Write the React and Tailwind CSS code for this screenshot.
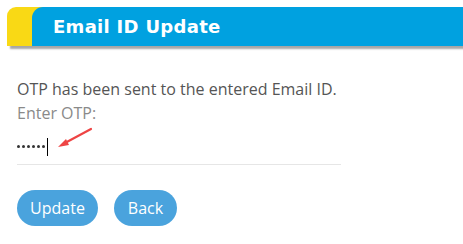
import React from "react";

export default function App() {
  return (
    <div className="relative w-[463px] h-[244px] bg-white overflow-hidden" style={{ fontFamily: '"Open Sans", sans-serif' }}>
      <div className="pt-[7px] pl-[7px]">
        <div className="flex h-[39px] bg-[#f9d915] rounded-tl-[9px] shadow-[3px_3px_2px_rgba(0,0,0,0.35)]">
          <div className="w-[25px]" />
          <div className="flex-1 flex items-center bg-[#00a1e0] rounded-tl-[11px] pl-[21px]">
            <span className="text-white font-bold text-[18px] leading-none mt-[1px] tracking-[0.3px]" style={{ fontFamily: '"DejaVu Sans", Verdana, sans-serif' }}>
              Email ID Update
            </span>
          </div>
        </div>
      </div>

      <div className="pl-[17px] pt-[31px]">
        <p className="text-[16px] leading-[24px] text-[#555555]">OTP has been sent to the entered Email ID.</p>
        <p className="text-[16px] leading-[24px] text-[#8a8a8a]">Enter OTP:</p>
        <div className="w-[324px] h-[40px] border-b border-[#e6e6e6] flex items-center">
          <div className="flex items-center gap-[2px] mt-[4px]">
            <span className="w-[3px] h-[3px] rounded-full bg-[#333]" />
            <span className="w-[3px] h-[3px] rounded-full bg-[#333]" />
            <span className="w-[3px] h-[3px] rounded-full bg-[#333]" />
            <span className="w-[3px] h-[3px] rounded-full bg-[#333]" />
            <span className="w-[3px] h-[3px] rounded-full bg-[#333]" />
            <span className="w-[3px] h-[3px] rounded-full bg-[#333]" />
          </div>
          <span className="ml-[2px] w-px h-[18px] bg-black mt-[4px]" />
        </div>
        <div className="flex gap-[16px] mt-[25px]">
          <button className="w-[81px] h-[36px] rounded-full bg-[#4aa3dd] text-white text-[16px]">Update</button>
          <button className="w-[63px] h-[36px] rounded-full bg-[#4aa3dd] text-white text-[16px]">Back</button>
        </div>
      </div>

      <svg className="absolute left-0 top-0" width="463" height="244" viewBox="0 0 463 244">
        <line x1="91" y1="129" x2="64" y2="143.5" stroke="#ee4444" strokeWidth="2.2" strokeLinecap="round" />
        <polygon points="58,147 66,139 69,145" fill="#ee4444" />
      </svg>
    </div>
  );
}
